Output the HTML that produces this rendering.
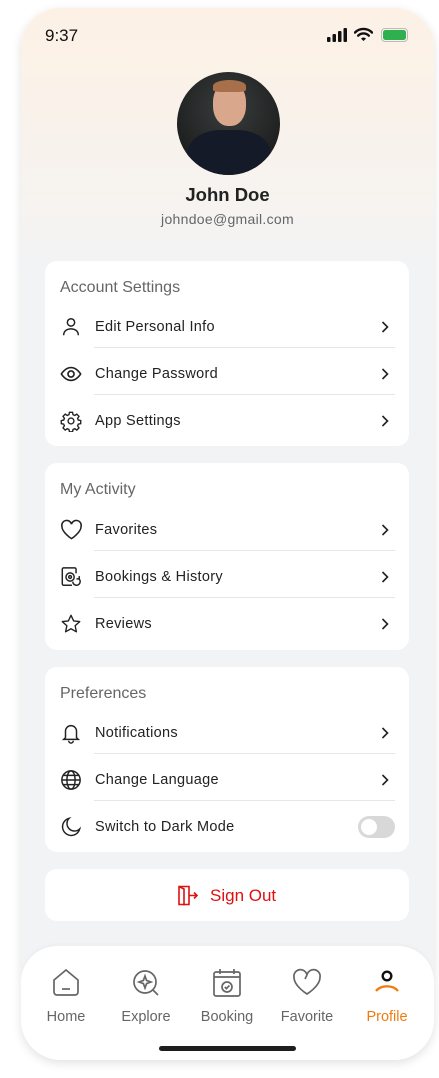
<!DOCTYPE html>
<html><head><meta charset="utf-8"><style>
*{margin:0;padding:0;box-sizing:border-box}
body{width:439px;height:1078px;background:#fff;font-family:"Liberation Sans",sans-serif;position:relative;overflow:hidden}
.phone{position:absolute;left:21px;top:8px;width:413px;height:1052px;border-radius:40px;overflow:hidden;background:linear-gradient(#fdf1e5 0px,#f6f3f0 200px,#f2f3f5 260px,#f2f3f5 100%);box-shadow:0 3px 10px rgba(0,0,0,.12)}
.abs{position:absolute}
.card{position:absolute;left:24px;width:364px;background:#fff;border-radius:12px}
.title{position:absolute;left:15px;top:18px;font-size:16px;color:#666}
.row{position:absolute;left:0;width:364px;height:47px}
.row svg.ic{position:absolute;left:15px;top:50%;transform:translateY(-50%)}
.row .t{position:absolute;left:50px;top:50%;transform:translateY(-50%);font-size:14.5px;color:#222;letter-spacing:.3px}
.row .ch{position:absolute;right:20px;top:50%;transform:translateY(-50%)}
.div{position:absolute;left:49px;right:14px;height:1px;background:#e6e6e6}
.nav{position:absolute;left:0;top:938px;width:413px;height:114px;background:#fff;border-radius:36px 36px 0 0;box-shadow:0 -1px 4px rgba(0,0,0,.04)}
.ni{position:absolute;top:22px;width:80px;text-align:center;font-size:14.5px;color:#666}
.ni svg{display:block;margin:0 auto 11px}
</style></head><body>
<div class="phone">
  <div class="abs" style="left:24px;top:18px;font-size:17px;color:#111;font-weight:500">9:37</div>
  <svg class="abs" style="left:306px;top:20px" width="20" height="14"><rect x="0" y="9" width="3.5" height="5" rx="1" fill="#111"/><rect x="5.5" y="6" width="3.5" height="8" rx="1" fill="#111"/><rect x="11" y="3" width="3.5" height="11" rx="1" fill="#111"/><rect x="16.5" y="0" width="3.5" height="14" rx="1" fill="#111"/></svg>
  <svg class="abs" style="left:333px;top:19px" width="19" height="15" viewBox="0 0 19 15"><path d="M1 5.5a12 12 0 0 1 17 0" stroke="#111" stroke-width="2.4" fill="none" stroke-linecap="round"/><path d="M4.2 8.6a7.5 7.5 0 0 1 10.6 0" stroke="#111" stroke-width="2.4" fill="none" stroke-linecap="round"/><path d="M7 11.6a3.4 3.4 0 0 1 5 0L9.5 14z" fill="#111"/></svg>
  <div class="abs" style="left:360px;top:20px;width:27px;height:14px;border:1px solid #bbb;border-radius:4px;padding:1px"><div style="width:100%;height:100%;background:#2fb04f;border-radius:2.5px"></div></div>
  <div class="abs" style="left:156px;top:64px;width:103px;height:103px;border-radius:50%;background:radial-gradient(circle at 50% 35%,#3a3d3d,#1e2020 70%);overflow:hidden">
    <div class="abs" style="left:36px;top:10px;width:33px;height:44px;border-radius:45%;background:#d9a88c"></div>
    <div class="abs" style="left:36px;top:8px;width:33px;height:12px;border-radius:50% 50% 20% 20%;background:#a8704a"></div>
    <div class="abs" style="left:10px;top:58px;width:84px;height:60px;border-radius:40% 40% 0 0;background:#151a28"></div>
  </div>
  <div class="abs" style="left:0;width:413px;top:176px;text-align:center;font-size:18.5px;font-weight:bold;color:#222">John Doe</div>
  <div class="abs" style="left:0;width:413px;top:203px;text-align:center;font-size:14px;color:#666;letter-spacing:.3px">johndoe@gmail.com</div>

  <div class="card" style="top:253px;height:185px">
    <div class="title">Account Settings</div>
    <div class="row" style="top:42px"><svg class="ic" width="22" height="22" viewBox="0 0 24 24" fill="none" stroke="#222" stroke-width="1.6"><circle cx="12" cy="7" r="4"/><path d="M4 21c0-4.5 3.5-7 8-7s8 2.5 8 7"/></svg><span class="t">Edit Personal Info</span><svg class="ch" width="8" height="13" viewBox="0 0 8 13"><path d="M1.5 1.5l5 5-5 5" fill="none" stroke="#222" stroke-width="1.6"/></svg></div>
    <div class="div" style="top:86px"></div>
    <div class="row" style="top:89px"><svg class="ic" width="22" height="22" viewBox="0 0 24 24" fill="none" stroke="#222" stroke-width="1.8"><path d="M1.5 12S5.5 5 12 5s10.5 7 10.5 7-4 7-10.5 7S1.5 12 1.5 12z"/><circle cx="12" cy="12" r="3.3"/></svg><span class="t">Change Password</span><svg class="ch" width="8" height="13" viewBox="0 0 8 13"><path d="M1.5 1.5l5 5-5 5" fill="none" stroke="#222" stroke-width="1.6"/></svg></div>
    <div class="div" style="top:133px"></div>
    <div class="row" style="top:136px"><svg class="ic" width="22" height="22" viewBox="0 0 24 24" fill="none" stroke="#222" stroke-width="1.5"><circle cx="12" cy="12" r="3.2"/><path d="M10.3 2.5h3.4l.5 2.6 1.9.9 2.2-1.5 2.4 2.4-1.5 2.2.8 1.9 2.6.5v3.4l-2.6.5-.8 1.9 1.5 2.2-2.4 2.4-2.2-1.5-1.9.8-.5 2.6h-3.4l-.5-2.6-1.9-.8-2.2 1.5-2.4-2.4 1.5-2.2-.8-1.9-2.6-.5v-3.4l2.6-.5.8-1.9-1.5-2.2 2.4-2.4 2.2 1.5 1.9-.9z"/></svg><span class="t">App Settings</span><svg class="ch" width="8" height="13" viewBox="0 0 8 13"><path d="M1.5 1.5l5 5-5 5" fill="none" stroke="#222" stroke-width="1.6"/></svg></div>
  </div>

  <div class="card" style="top:455px;height:187px">
    <div class="title">My Activity</div>
    <div class="row" style="top:43px"><svg class="ic" width="23" height="22" viewBox="0 0 24 22" fill="none" stroke="#222" stroke-width="1.6"><path d="M12 20S2 13.5 2 7.3A5 5 0 0 1 12 5a5 5 0 0 1 10 2.3C22 13.5 12 20 12 20z"/></svg><span class="t">Favorites</span><svg class="ch" width="8" height="13" viewBox="0 0 8 13"><path d="M1.5 1.5l5 5-5 5" fill="none" stroke="#222" stroke-width="1.6"/></svg></div>
    <div class="div" style="top:87px"></div>
    <div class="row" style="top:90px"><svg class="ic" width="22" height="22" viewBox="0 0 24 24" fill="none" stroke="#222" stroke-width="1.6"><path d="M13 21H4a1.5 1.5 0 0 1-1.5-1.5v-16A1.5 1.5 0 0 1 4 2h12a1.5 1.5 0 0 1 1.5 1.5V8"/><circle cx="11" cy="12" r="4.5"/><circle cx="11" cy="12" r="1.5"/><path d="M14 17a4 4 0 1 0 6-3.5M21 11v3h-3"/></svg><span class="t">Bookings &amp; History</span><svg class="ch" width="8" height="13" viewBox="0 0 8 13"><path d="M1.5 1.5l5 5-5 5" fill="none" stroke="#222" stroke-width="1.6"/></svg></div>
    <div class="div" style="top:134px"></div>
    <div class="row" style="top:137px"><svg class="ic" width="22" height="22" viewBox="0 0 24 24" fill="none" stroke="#222" stroke-width="1.5" stroke-linejoin="round"><path d="M12 2.5l2.9 6.2 6.6.7-5 4.5 1.4 6.6L12 17.2l-5.9 3.3 1.4-6.6-5-4.5 6.6-.7z"/></svg><span class="t">Reviews</span><svg class="ch" width="8" height="13" viewBox="0 0 8 13"><path d="M1.5 1.5l5 5-5 5" fill="none" stroke="#222" stroke-width="1.6"/></svg></div>
  </div>

  <div class="card" style="top:659px;height:185px">
    <div class="title">Preferences</div>
    <div class="row" style="top:42px"><svg class="ic" width="22" height="22" viewBox="0 0 24 24" fill="none" stroke="#222" stroke-width="1.6"><path d="M6 17V10a6 6 0 0 1 12 0v7l2 2H4z"/><path d="M9.5 20.5a2.5 2.5 0 0 0 5 0"/></svg><span class="t">Notifications</span><svg class="ch" width="8" height="13" viewBox="0 0 8 13"><path d="M1.5 1.5l5 5-5 5" fill="none" stroke="#222" stroke-width="1.6"/></svg></div>
    <div class="div" style="top:86px"></div>
    <div class="row" style="top:89px"><svg class="ic" width="22" height="22" viewBox="0 0 24 24" fill="none" stroke="#222" stroke-width="1.6"><circle cx="12" cy="12" r="10"/><ellipse cx="12" cy="12" rx="4.5" ry="10"/><path d="M2 12h20M3.5 7h17M3.5 17h17"/></svg><span class="t">Change Language</span><svg class="ch" width="8" height="13" viewBox="0 0 8 13"><path d="M1.5 1.5l5 5-5 5" fill="none" stroke="#222" stroke-width="1.6"/></svg></div>
    <div class="div" style="top:133px"></div>
    <div class="row" style="top:136px"><svg class="ic" width="22" height="22" viewBox="0 0 24 24" fill="none" stroke="#222" stroke-width="1.6"><path d="M10 2.5A9.5 9.5 0 1 0 21.5 14 8 8 0 0 1 10 2.5z"/></svg><span class="t">Switch to Dark Mode</span><div class="abs" style="right:14px;top:13px;width:37px;height:22px;border-radius:11px;background:#d8d8d8"><div class="abs" style="left:3px;top:3px;width:16px;height:16px;border-radius:50%;background:#fff"></div></div></div>
  </div>

  <div class="card" style="top:861px;height:52px">
    <svg class="abs" style="left:133px;top:16px" width="20" height="21" viewBox="0 0 20 21" fill="none" stroke="#e01010" stroke-width="1.6"><path d="M1 1.5h10v18H1z"/><path d="M1 1.5l5 2.5v16.5"/><path d="M11 10.5h8M16 7.5l3 3-3 3"/></svg>
    <div class="abs" style="left:165px;top:17px;font-size:17px;color:#e01010;font-weight:500">Sign Out</div>
  </div>

  <div class="nav">
    <div class="ni" style="left:5px"><svg width="30" height="30" viewBox="0 0 30 30" fill="none" stroke="#666" stroke-width="1.7"><path d="M3 12L15 2l12 10v12a3 3 0 0 1-3 3H6a3 3 0 0 1-3-3z"/><path d="M11 21h8"/></svg>Home</div>
    <div class="ni" style="left:85px"><svg width="30" height="30" viewBox="0 0 30 30" fill="none" stroke="#666" stroke-width="1.7"><circle cx="14" cy="14" r="11"/><path d="M22 22l5 5"/><path d="M14 8l1.6 4.4L20 14l-4.4 1.6L14 20l-1.6-4.4L8 14l4.4-1.6z"/></svg>Explore</div>
    <div class="ni" style="left:166px"><svg width="30" height="30" viewBox="0 0 30 30" fill="none" stroke="#666" stroke-width="1.7"><rect x="2" y="4" width="26" height="24" rx="2"/><path d="M2 9h26M8 1v5M22 1v5"/><circle cx="15" cy="19" r="5"/><path d="M12.8 19l1.6 1.6 3-3.2"/></svg>Booking</div>
    <div class="ni" style="left:246px"><svg width="30" height="30" viewBox="0 0 30 30" fill="none" stroke="#666" stroke-width="1.7"><path d="M15 26S2 18 2 9.5A6.5 6.5 0 0 1 15 7a6.5 6.5 0 0 1 13 2.5C28 18 15 26 15 26z"/><path d="M15 7l-2 4"/></svg>Favorite</div>
    <div class="ni" style="left:326px;color:#f07c10"><svg width="30" height="30" viewBox="0 0 30 30" fill="none" stroke-width="2.4"><circle cx="15" cy="8" r="4.3" stroke="#111"/><path d="M4 23a13 10 0 0 1 22 0" stroke="#f07c10"/></svg>Profile</div>
    <div class="abs" style="left:138px;top:100px;width:137px;height:5px;border-radius:3px;background:#1e1e1e"></div>
  </div>
</div>
</body></html>
